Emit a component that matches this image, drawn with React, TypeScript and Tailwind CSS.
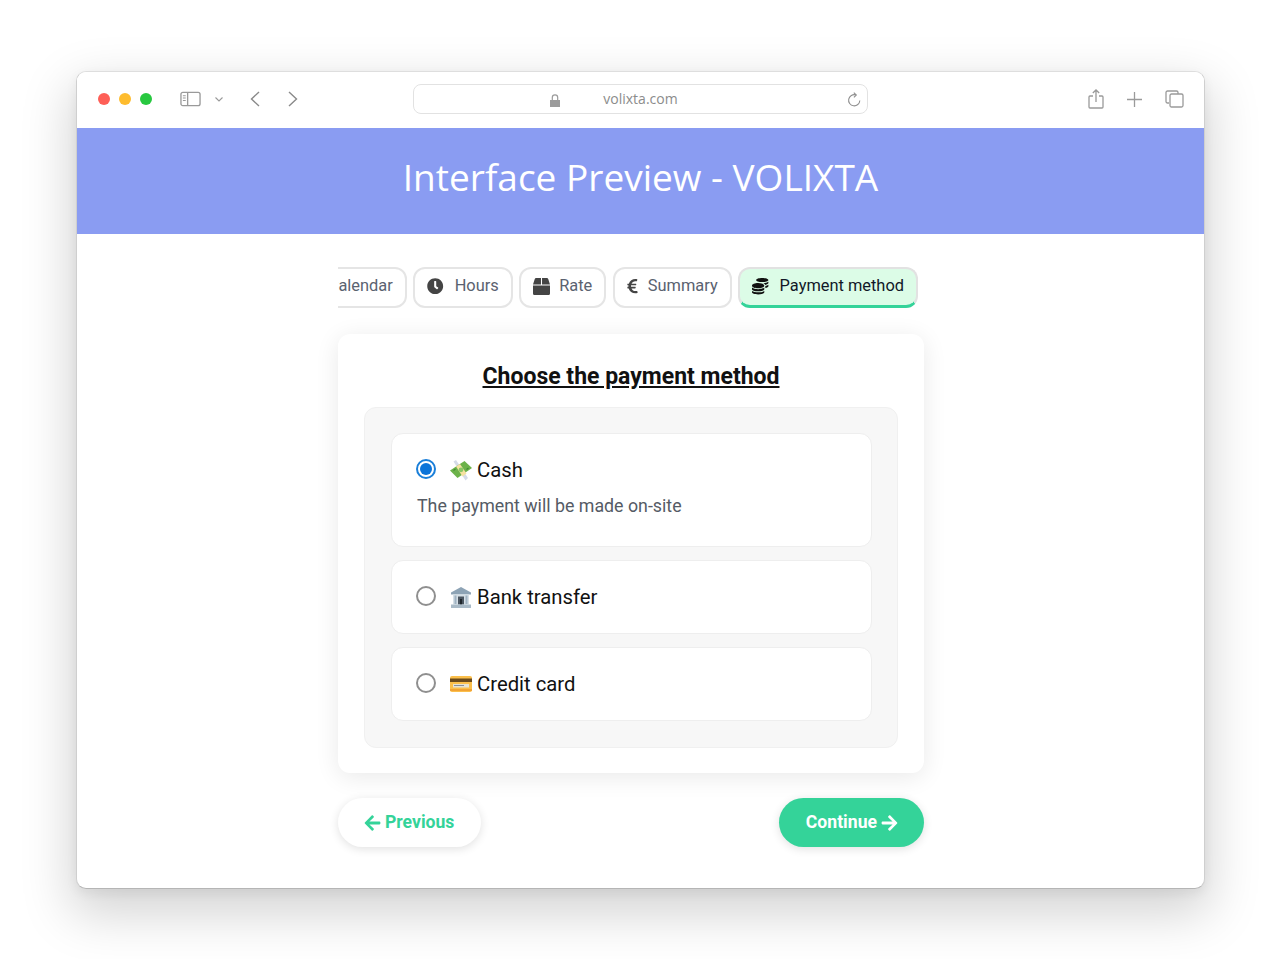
import { FaArrowLeft, FaArrowRight, FaBox, FaClock, FaCoins, FaEuroSign, FaRegCalendarAlt } from 'react-icons/fa';
import type { ReactNode } from 'react';

function Toolbar() {
  return (
    <div className="flex h-[56px] items-center bg-white pb-[2px]">
      {/* Traffic lights */}
      <div className="ml-[21px] flex gap-[9px]">
        <span className="h-3 w-3 rounded-full bg-[#fe5f57]" />
        <span className="h-3 w-3 rounded-full bg-[#febc2e]" />
        <span className="h-3 w-3 rounded-full bg-[#28c840]" />
      </div>
      <svg className="ml-[28px]" width="21" height="16" viewBox="0 0 22 16" fill="none" stroke="#9a9a9a" strokeWidth="1.4">
        <rect x="1" y="1" width="20" height="14" rx="2" />
        <path d="M8 1v14" />
        <path d="M3 4.500h3M3 7h3M3 9.500h3" strokeWidth="1.1" />
      </svg>
      <svg className="ml-[14px]" width="8" height="5" viewBox="0 0 8 5" fill="none" stroke="#9a9a9a" strokeWidth="1.1">
        <path d="M.5.5 4 4 7.500.5" />
      </svg>
      <svg className="ml-[27px]" width="10" height="16" viewBox="0 0 10 16" fill="none" stroke="#8a8a8a" strokeWidth="1.4">
        <path d="M9 1 1.500 8 9 15" />
      </svg>
      <svg className="ml-[28px]" width="10" height="16" viewBox="0 0 10 16" fill="none" stroke="#8a8a8a" strokeWidth="1.4">
        <path d="M1 1l7.500 7L1 15" />
      </svg>

      {/* Address bar */}
      <div className="relative ml-[115px] flex h-[30px] w-[455px] items-center justify-center rounded-lg border border-[#e2e2e2] bg-white font-['Open_Sans',sans-serif] text-sm text-[#8c8c8c]">
        <svg className="absolute left-[136px] top-[9px]" width="10" height="13" viewBox="0 0 10 13" fill="#9b9b9b">
          <path d="M0 6h10v7H0z" />
          <path d="M2.300 6V3.600a2.700 2.700 0 0 1 5.400 0V6" fill="none" stroke="#9b9b9b" strokeWidth="1.2" />
        </svg>
        volixta.com
        <svg className="absolute right-[5px] top-[7px]" width="15" height="16" viewBox="0 0 15 16" fill="none" stroke="#8f8f8f" strokeWidth="1.1">
          <path d="M12.800 8.500a5.600 5.600 0 1 1-4-5.600" />
          <path d="M6.800.6 9.300 3 6.900 5.300" />
        </svg>
      </div>

      <svg className="ml-[220px]" width="16" height="20" viewBox="0 0 16 20" fill="none" stroke="#9a9a9a" strokeWidth="1.3">
        <path d="M5 7H2a1 1 0 0 0-1 1v10a1 1 0 0 0 1 1h12a1 1 0 0 0 1-1V8a1 1 0 0 0-1-1h-3" />
        <path d="M8 13V1M4.800 4 8 1l3.200 3" />
      </svg>
      <svg className="ml-[23px]" width="15" height="15" viewBox="0 0 15 15" fill="none" stroke="#9a9a9a" strokeWidth="1.3">
        <path d="M7.500 0v15M0 7.500h15" />
      </svg>
      <svg className="ml-[23px]" width="19" height="18" viewBox="0 0 19 18" fill="none" stroke="#9a9a9a" strokeWidth="1.3">
        <path d="M4 13H2.500A1.500 1.500 0 0 1 1 11.500v-9A1.500 1.500 0 0 1 2.500 1h9A1.500 1.500 0 0 1 13 2.500V4" />
        <rect x="5" y="4" width="13" height="13" rx="1.500" />
      </svg>
    </div>
  );
}

function Tab({ icon, label, active }: { icon: ReactNode; label: string; active?: boolean }) {
  return (
    <div
      className={`flex h-[41px] shrink-0 items-center gap-[11px] rounded-[12px] border-2 px-[12px] text-[16.4px] ${
        active
          ? 'border-[#e2e2e2] border-b-[3px] border-b-[#34d399] bg-[#dcfce7] pb-[1px] text-[#111827]'
          : 'border-[#e5e5e5] bg-white pb-[3px] text-[#5a6270]'
      }`}
    >
      <span className={active ? 'text-[#111111]' : 'text-[#444444]'}>{icon}</span>
      {label}
    </div>
  );
}

function CashEmoji() {
  return (
    <svg width="22" height="21" viewBox="0 0 22 21">
      <path d="M3.500 1.500 6 0l12 18-2.500 2.500z" fill="#d5dbe8" />
      <path d="M0 10.500 14.500 1 22 8 7.500 18z" fill="#6cb24a" />
      <path d="M6 6.500 10 4l6.500 9.500-4 3z" fill="#f5e2a0" />
      <circle cx="11" cy="9.800" r="2.400" fill="#8ac766" />
      <path d="M3.500 10.500 5.500 9M16.500 9.500 18.500 8" stroke="#3f8a35" strokeWidth="1.200" />
    </svg>
  );
}

function BankEmoji() {
  return (
    <svg width="22" height="21" viewBox="0 0 22 21">
      <path d="M11 0 21 5.500V7.500H1V5.500z" fill="#8da3b5" />
      <path d="M3 7.500h16v10H3z" fill="#d5dfe6" />
      <path d="M4.500 8.500h2v8.500h-2zM15.500 8.500h2v8.500h-2z" fill="#9fb2c1" />
      <path d="M8 9.500h6v8H8z" fill="#4a5560" />
      <path d="M10 12h2v5.500h-2z" fill="#20262c" />
      <path d="M1 17.500h20V21H1z" fill="#a9bac7" />
    </svg>
  );
}

function CardEmoji() {
  return (
    <svg width="22" height="16" viewBox="0 0 22 16">
      <rect width="22" height="16" rx="2" fill="#fbbf4b" />
      <path d="M0 2.500h22v3.500H0z" fill="#6b4a1c" />
      <path d="M3 8h16v3.500H3z" fill="#e7e3d3" />
      <path d="M4 9.500h10" stroke="#8a8f99" strokeWidth="1" />
      <path d="M0 14h22" stroke="#ef9b2d" strokeWidth="1.500" />
    </svg>
  );
}

function Radio({ checked }: { checked?: boolean }) {
  return (
    <span
      className={`-ml-[1px] mb-[2px] flex h-[20px] w-[20px] shrink-0 items-center justify-center rounded-full border-2 bg-white ${
        checked ? 'border-[#1a7fd9]' : 'border-[#8f8f8f]'
      }`}
    >
      {checked && <span className="h-3 w-3 rounded-full bg-[#0b74d9]" />}
    </span>
  );
}

function Option({ emoji, label, checked, note }: { emoji: ReactNode; label: string; checked?: boolean; note?: string }) {
  return (
    <div className={`rounded-[12px] border border-[#eeeeee] bg-white px-[25px] ${note ? 'pb-[27px] pt-[25px]' : 'py-[25px]'}`}>
      <div className="flex h-[22px] items-center">
        <Radio checked={checked} />
        <span className="ml-[14px] flex w-[22px] justify-center">{emoji}</span>
        <span className="ml-[5px] pt-[1px] text-[20.3px] leading-none text-[#111111]">{label}</span>
      </div>
      {note && <p className="mt-[12px] text-[17.8px] leading-[26px] text-[#555b65]">{note}</p>}
    </div>
  );
}

export default function App() {
  return (
    <div className="h-[959px] overflow-hidden bg-white pl-[76px] pt-[71px] font-['Roboto',sans-serif]">
      <div className="h-[818px] w-[1129px] overflow-hidden rounded-[10px] border-x border-b border-t border-x-[#cfcfcf] border-b-[#b5b5b5] border-t-[#dedede] bg-white shadow-[0_20px_50px_6px_rgba(0,0,0,0.17),0_4px_12px_rgba(0,0,0,0.06)]">
        <Toolbar />
        <div className="flex h-[106px] items-center justify-center bg-[#8a9cf2] pb-[9px] font-['Open_Sans',sans-serif] text-[37px] text-white">
          Interface Preview - VOLIXTA
        </div>

        <div className="ml-[261px] w-[586px] pt-[33px]">
          {/* Tabs are scrolled to the right, first one gets clipped */}
          <div className="flex justify-end gap-[6.5px] overflow-hidden pr-[6px]">
            <Tab icon={<FaRegCalendarAlt />} label="Calendar" />
            <Tab icon={<FaClock />} label="Hours" />
            <Tab icon={<FaBox className="-mr-[2px] h-[17px] w-[17px]" />} label="Rate" />
            <Tab icon={<FaEuroSign className="-mr-[1px] w-[11px]" />} label="Summary" />
            <Tab icon={<FaCoins />} label="Payment method" active />
          </div>

          <div className="mt-[26px] rounded-[12px] bg-white p-[26px] pb-[25px] shadow-[0_4px_24px_rgba(0,0,0,0.09)]">
            <h2 className="mb-[14px] pt-[1px] text-center text-[23px] font-bold leading-[32px] text-[#111111] underline">
              Choose the payment method
            </h2>
            <div className="flex flex-col gap-[13px] rounded-[12px] border border-[#f0f0f0] bg-[#f7f7f7] pb-[26px] pl-[26px] pr-[25px] pt-[25px]">
              <Option emoji={<CashEmoji />} label="Cash" note="The payment will be made on-site" checked />
              <Option emoji={<BankEmoji />} label="Bank transfer" />
              <Option emoji={<CardEmoji />} label="Credit card" />
            </div>
          </div>

          <div className="mt-[25px] flex justify-between text-[17.6px] font-bold">
            <button className="flex h-[49px] items-center gap-[4px] rounded-full bg-white pl-[26px] pr-[27px] text-[#34d399] shadow-[0_2px_10px_rgba(0,0,0,0.12)]">
              <FaArrowLeft className="h-[18px] w-[17px]" /> Previous
            </button>
            <button className="flex h-[49px] items-center gap-[4px] rounded-full bg-[#34d399] pl-[27px] pr-[26px] text-white shadow-[0_2px_10px_rgba(0,0,0,0.12)]">
              Continue <FaArrowRight className="h-[18px] w-[17px]" />
            </button>
          </div>
        </div>
      </div>
    </div>
  );
}
